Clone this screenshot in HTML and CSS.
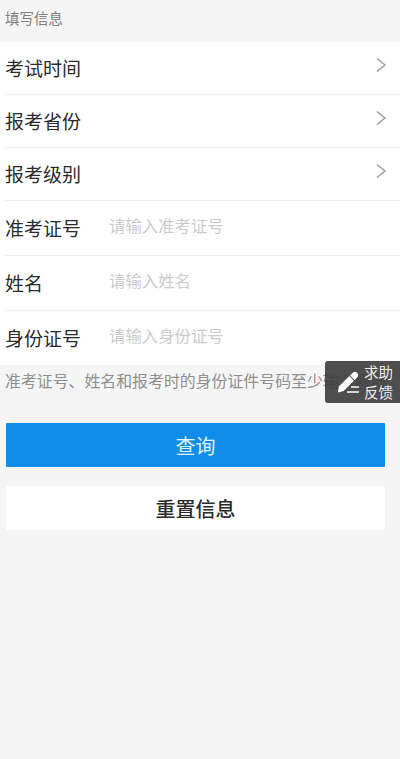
FILE: index.html
```html
<!DOCTYPE html>
<html lang="zh-CN">
<head>
    <meta charset="UTF-8">
    <meta name="viewport" content="width=device-width, initial-scale=1">
    <title>填写信息</title>
    <link rel="stylesheet" href="styles.css">
</head>
<body>

    <!-- Section title -->
    <div class="section-title">填写信息</div>

    <!-- Form list -->
    <div class="form-list">
        <div class="row select-row">
            <span class="label">考试时间</span>
            <svg class="chevron" viewBox="0 0 12 16"><path d="M2 1.5 L10 8 L2 14.5"/></svg>
        </div>
        <div class="row select-row">
            <span class="label">报考省份</span>
            <svg class="chevron" viewBox="0 0 12 16"><path d="M2 1.5 L10 8 L2 14.5"/></svg>
        </div>
        <div class="row select-row">
            <span class="label">报考级别</span>
            <svg class="chevron" viewBox="0 0 12 16"><path d="M2 1.5 L10 8 L2 14.5"/></svg>
        </div>
        <div class="row input-row">
            <span class="label">准考证号</span>
            <span class="placeholder">请输入准考证号</span>
        </div>
        <div class="row input-row">
            <span class="label">姓名</span>
            <span class="placeholder">请输入姓名</span>
        </div>
        <div class="row input-row">
            <span class="label">身份证号</span>
            <span class="placeholder">请输入身份证号</span>
        </div>
    </div>

    <!-- Hint -->
    <p class="hint">准考证号、姓名和报考时的身份证件号码至少输入两项</p>

    <!-- Buttons -->
    <div class="actions">
        <button class="btn btn-primary">查询</button>
        <button class="btn btn-reset">重置信息</button>
    </div>

    <!-- Floating help badge -->
    <div class="help-badge">
        <svg class="help-icon" viewBox="0 0 24 24">
            <path class="pen" d="M3 22.5 L3.8 16.6 L14.3 6.1 L18.9 10.7 L8.6 21 Z"/>
            <path class="pen" d="M15 5.4 L18 2.4 Q20.4 0.8 22.2 2.8 Q24 4.8 22.6 7 L19.6 10 Z"/>
            <path class="pen-line" d="M12 22 H24 M16 17 H24"/>
        </svg>
        <span class="help-text">求助<br>反馈</span>
    </div>

</body>
</html>
```

FILE: styles.css
```css
/* General Styles */
body {
    margin: 0;
    height: 759px;
    overflow: hidden;
    position: relative;
    background: #f5f5f5;
    color: #2b2b2b;
    font-family: "Noto Sans CJK SC", "Noto Sans", sans-serif;
}

/* Section title */
.section-title {
    height: 42px;
    padding: 8px 0 0 5px;
    box-sizing: border-box;
    font-size: 14.5px;
    line-height: 20px;
    color: #808080;
}

/* Form list */
.form-list {
    background: white;
    padding-left: 5px;
}

.row {
    display: flex;
    align-items: center;
    box-sizing: border-box;
    border-bottom: 1px solid #f1f1f1;
}

.select-row {
    height: 53px;
    justify-content: space-between;
    padding-right: 13px;
}

.input-row {
    height: 55px;
}

.row:last-child {
    height: 54px;
    border-bottom: none;
}

.label {
    font-size: 19px;
    line-height: 26px;
    width: 104px;
    flex-shrink: 0;
}

.placeholder {
    font-size: 16.4px;
    color: #cbcbcb;
    margin-top: -6px;
}

.chevron {
    width: 12px;
    height: 16px;
    margin-top: -7px;
    fill: none;
    stroke: #9a9a9a;
    stroke-width: 1.4;
}

/* Hint */
.hint {
    margin: 0;
    padding: 5px 0 0 5px;
    height: 58px;
    box-sizing: border-box;
    font-size: 15.9px;
    line-height: 22px;
    color: #8f8f8f;
    white-space: nowrap;
    overflow: hidden;
}

/* Buttons */
.actions {
    display: flex;
    flex-direction: column;
    gap: 19px;
    padding: 0 15px 0 6px;
}

.btn {
    height: 44px;
    border: none;
    padding: 0;
    font-family: inherit;
    font-size: 20px;
    border-radius: 1px;
}

.btn-primary {
    background: #108de8;
    color: #e4f3fd;
}

.btn-reset {
    background: white;
    color: #2b2b2b;
    font-weight: 500;
}

/* Floating help badge */
.help-badge {
    position: absolute;
    top: 361px;
    left: 325px;
    width: 75px;
    height: 42px;
    box-sizing: border-box;
    display: flex;
    align-items: center;
    background: rgba(60, 60, 60, 0.9);
    border-radius: 3px 0 0 3px;
}

.help-icon {
    width: 24px;
    height: 24px;
    margin-left: 10px;
    flex-shrink: 0;
}

.pen {
    fill: white;
}

.pen-line {
    fill: none;
    stroke: white;
    stroke-width: 1.6;
}

.help-text {
    margin-left: 5px;
    font-size: 14.5px;
    line-height: 20px;
    color: #ededed;
}
```
